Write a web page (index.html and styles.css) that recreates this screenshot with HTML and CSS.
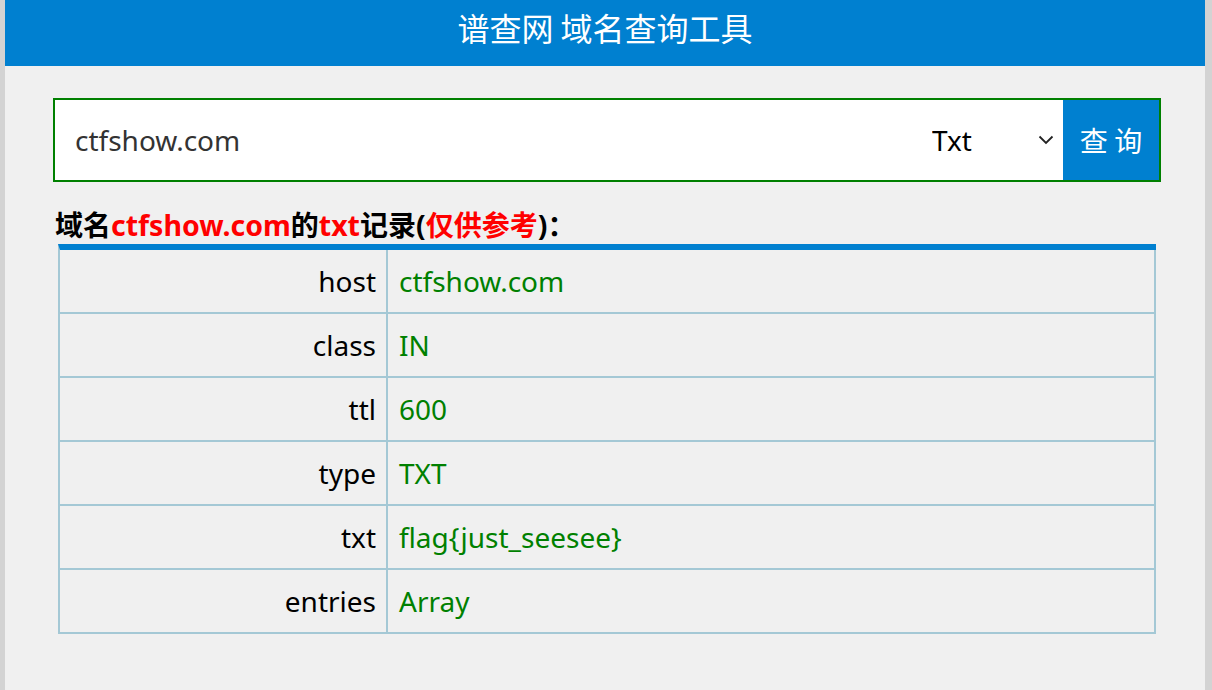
FILE: index.html
```html
<!DOCTYPE html>
<html lang="zh-CN">
<head>
<meta charset="utf-8">
<title>谱查网 域名查询工具</title>
<link rel="stylesheet" href="styles.css">
</head>
<body>
<div class="page">
  <header class="topbar">谱查网 域名查询工具</header>
  <form class="search">
    <input class="search-input" type="text" value="ctfshow.com">
    <div class="type">
      <select class="type-select">
        <option>Txt</option>
      </select>
      <svg class="chev" width="16" height="10" viewBox="0 0 16 10"><path d="M1.5 1.5 L8 8 L14.5 1.5" fill="none" stroke="#222" stroke-width="1.8"/></svg>
    </div>
    <button class="search-btn" type="button">查 询</button>
  </form>
  <h3 class="result-title">域名<span class="red lat">ctfshow.com</span>的<span class="red lat">txt</span>记录<span class="lat">(</span><span class="red">仅供参考</span><span class="lat">)</span>：</h3>
  <table class="result">
    <tr><td class="k">host</td><td class="v">ctfshow.com</td></tr>
    <tr><td class="k">class</td><td class="v">IN</td></tr>
    <tr><td class="k">ttl</td><td class="v">600</td></tr>
    <tr><td class="k">type</td><td class="v">TXT</td></tr>
    <tr><td class="k">txt</td><td class="v">flag{just_seesee}</td></tr>
    <tr><td class="k">entries</td><td class="v">Array</td></tr>
  </table>
</div>
</body>
</html>
```
FILE: styles.css
```css
html, body {
  margin: 0;
  padding: 0;
}
body {
  background: #d3d3d3;
  padding-left: 5px;
  font-family: "Noto Sans", "Noto Sans CJK SC", sans-serif;
}
.page {
  width: 1200px;
  min-height: 690px;
  background: #f0f0f0;
  overflow: hidden;
}
.topbar {
  height: 66px;
  background: #0080d0;
  color: #fff;
  font-size: 32px;
  line-height: 54px;
  text-align: center;
  font-family: "Noto Sans CJK SC", sans-serif;
}
.search {
  display: flex;
  margin: 32px 0 0 48px;
  width: 1104px;
  height: 80px;
  border: 2px solid #008000;
  background: #fff;
}
.search-input {
  flex: 1;
  min-width: 0;
  border: 0;
  outline: none;
  padding: 0 0 0 20px;
  font-family: "Noto Sans", "Noto Sans CJK SC", sans-serif;
  font-size: 28px;
  color: #333;
  background: #fff;
}
.type {
  width: 148px;
  display: flex;
  align-items: center;
}
.type-select {
  appearance: none;
  -webkit-appearance: none;
  border: 0;
  outline: none;
  background: transparent;
  width: 123px;
  padding: 0 0 0 17px;
  font-family: "Noto Sans", sans-serif;
  font-size: 28px;
  color: #000;
}
.chev {
  flex: none;
}
.search-btn {
  width: 96px;
  border: 0;
  background: #0080d0;
  color: #fff;
  font-family: "Noto Sans CJK SC", sans-serif;
  font-size: 28px;
  padding: 0;
}
.result-title {
  margin: 24px 0 0 50px;
  height: 38px;
  font-size: 28px;
  line-height: 38px;
  font-weight: bold;
  color: #000;
  white-space: nowrap;
}
.lat {
  font-size: 28.5px;
  line-height: 1;
}
.red {
  color: #ff0000;
}
.result {
  margin: 0 0 0 53px;
  width: 1098px;
  border-spacing: 0;
  border-top: 6px solid #0080d0;
  border-left: 2px solid #a4c8d5;
  font-size: 28px;
}
.result td {
  height: 62px;
  padding: 0;
  border-right: 2px solid #a4c8d5;
  border-bottom: 2px solid #a4c8d5;
  vertical-align: middle;
}
.result .k {
  width: 316px;
  text-align: right;
  padding-right: 10px;
  color: #000;
}
.result .v {
  padding-left: 11px;
  color: #008000;
}
```
